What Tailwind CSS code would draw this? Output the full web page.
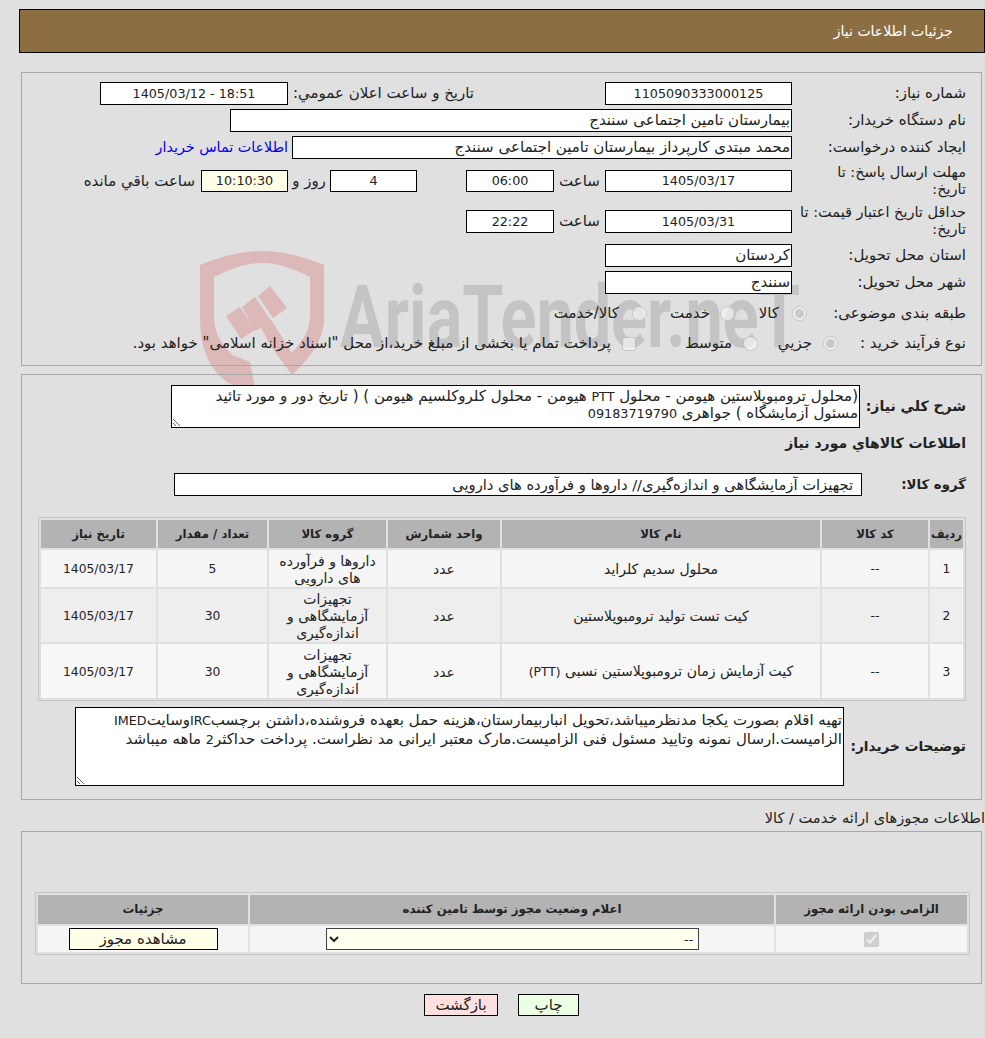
<!DOCTYPE html>
<html lang="fa" dir="rtl">
  <head>
    <meta charset="UTF-8" />
    <title>جزئیات اطلاعات نیاز</title>
    <script src="https://cdn.jsdelivr.net/npm/@tailwindcss/browser@4"></script>
  </head>
  <body class="relative min-h-screen bg-[#e0e0e0] text-[15px] leading-[17px] text-[#222] font-['DejaVu_Sans',sans-serif] overflow-x-hidden">
    <!-- watermark -->
    <svg class="absolute left-0 top-0 pointer-events-none" width="985" height="400">
      <path d="M200 265 C222 256 242 251 262 251 C282 251 302 256 324 265 L324 318 C324 340 310 358 292 375 L284 360 C300 346 310 332 310 316 L310 277 C294 269 278 263 262 263 C246 263 230 269 214 277 L214 318 C214 332 222 345 232 355 L250 362 L257 398 L240 398 L232 385 C210 372 200 350 200 318 Z" fill="#dcb8b8" />
      <path d="M226 316 L240 307 L255 330 L241 339 Z M242 307 L255 297 L272 322 L255 331 Z M258 296 L270 286 L287 308 L273 318 Z M258 322 L272 321 L295 358 L292 375 L270 345 Z" fill="#dcb8b8" />
      <text x="340" y="347" direction="ltr" text-anchor="start" font-size="88" font-weight="700" fill="#c4c4c4" font-family="Roboto, sans-serif" textLength="460" lengthAdjust="spacingAndGlyphs">AriaTender.neT</text>
    </svg>

    <div class="relative">
      <!-- header -->
      <div class="h-[44px] mt-[9px] ml-[19px] bg-[#8d6e42] border border-black flex items-center pr-[31px] absolute top-0 left-0 right-0">
        <span class="text-white text-[14px]">جزئیات اطلاعات نیاز</span>
      </div>

      <div class="pt-[72px] pl-[21px] pr-[3px]">
        <!-- form panel -->
        <section class="h-[294px] border border-[#a8a8a8] pr-[15px] pt-[9px]">
          <div class="flex items-center h-[23px]">
            <label class="w-[174px] shrink-0">شماره نیاز:</label>
            <div class="w-[187px] h-[23px] border border-black bg-white text-center leading-[21px] text-[12.75px]">1105090333000125</div>
            <label class="w-[181px] mr-[131px] ml-[5px] whitespace-nowrap">تاریخ و ساعت اعلان عمومي:</label>
            <div class="w-[188px] h-[23px] border border-black bg-white text-center leading-[21px] text-[12.75px]" dir="ltr">1405/03/12 - 18:51</div>
          </div>
          <div class="flex items-center h-[23px] mt-[4px]">
            <label class="w-[174px] shrink-0">نام دستگاه خریدار:</label>
            <div class="w-[562px] h-[23px] border border-black bg-white px-[1px] leading-[21px]">بیمارستان تامین اجتماعی سنندج</div>
          </div>
          <div class="flex items-center h-[23px] mt-[4px]">
            <label class="w-[174px] shrink-0">ایجاد کننده درخواست:</label>
            <div class="w-[500px] h-[23px] border border-black bg-white px-[1px] leading-[21px]">محمد مبتدی کارپرداز بیمارستان تامین اجتماعی سنندج</div>
            <a class="mr-[4px] text-[#0000ee] text-[14.3px] whitespace-nowrap">اطلاعات تماس خریدار</a>
          </div>
          <div class="flex items-center h-[36px] mt-[4px]">
            <label class="w-[174px] shrink-0 pl-[24px] text-[14.5px]">مهلت ارسال پاسخ: تا تاریخ:</label>
            <div class="w-[187px] h-[22px] border border-black bg-white text-center leading-[20px] text-[12.75px]">1405/03/17</div>
            <span class="w-[51px] text-center">ساعت</span>
            <div class="w-[88px] h-[22px] border border-black bg-white text-center leading-[20px] text-[12.75px]">06:00</div>
            <div class="w-[87px] h-[22px] mr-[49px] border border-black bg-white text-center leading-[20px] text-[12.75px]">4</div>
            <span class="w-[42px] text-center">روز و</span>
            <div class="w-[87px] h-[22px] border border-black bg-[#ffffe8] text-center leading-[20px] text-[12.75px]">10:10:30</div>
            <span class="mr-[6px] whitespace-nowrap">ساعت باقي مانده</span>
          </div>
          <div class="flex items-center h-[36px] mt-[4px]">
            <label class="w-[174px] shrink-0 text-[14.5px] pl-[4px]">حداقل تاریخ اعتبار قیمت: تا تاریخ:</label>
            <div class="w-[187px] h-[23px] border border-black bg-white text-center leading-[21px] text-[12.75px]">1405/03/31</div>
            <span class="w-[51px] text-center">ساعت</span>
            <div class="w-[88px] h-[23px] border border-black bg-white text-center leading-[21px] text-[12.75px]">22:22</div>
          </div>
          <div class="flex items-center h-[23px] mt-[5px]">
            <label class="w-[174px] shrink-0">استان محل تحویل:</label>
            <div class="w-[187px] h-[23px] border border-black bg-white px-[1px] leading-[21px]">کردستان</div>
          </div>
          <div class="flex items-center h-[23px] mt-[4px]">
            <label class="w-[174px] shrink-0">شهر محل تحویل:</label>
            <div class="w-[187px] h-[23px] border border-black bg-white px-[1px] leading-[21px]">سنندج</div>
          </div>
          <div class="flex items-center h-[23px] mt-[8px]">
            <label class="w-[159px] shrink-0">طبقه بندی موضوعی:</label>
            <input type="radio" disabled checked class="m-0 w-[15px] h-[15px]" />
            <span class="mr-[13px] w-[44px]">کالا</span>
            <input type="radio" disabled class="m-0 w-[15px] h-[15px]" />
            <span class="mr-[10px] w-[63px]">خدمت</span>
            <input type="radio" disabled class="m-0 w-[15px] h-[15px]" />
            <span class="mr-[13px]">کالا/خدمت</span>
          </div>
          <div class="flex items-center h-[23px] mt-[7px]">
            <label class="w-[128px] shrink-0">نوع فرآیند خرید :</label>
            <input type="radio" disabled checked class="m-0 w-[15px] h-[15px]" />
            <span class="mr-[11px] w-[54px]">جزيي</span>
            <input type="radio" disabled class="m-0 w-[15px] h-[15px]" />
            <span class="mr-[11px] w-[96px]">متوسط</span>
            <input type="checkbox" disabled class="m-0 w-[14px] h-[14px]" />
            <span class="mr-[11px] whitespace-nowrap">پرداخت تمام یا بخشی از مبلغ خرید،از محل "اسناد خزانه اسلامی" خواهد بود.</span>
          </div>
        </section>

        <!-- items panel -->
        <section class="h-[426px] mt-[8px] border border-[#a8a8a8] pr-[15px] pt-[10px]">
          <div class="flex items-center h-[43px]">
            <label class="w-[106px] shrink-0 font-bold text-[14px]">شرح كلي نیاز:</label>
            <div class="w-[689px] h-[43px] border border-black bg-white px-[1px] pt-[2px] leading-[17px] resize overflow-auto">(محلول ترومبوپلاستین هیومن - محلول <span class="text-[12.75px]">PTT</span> هیومن - محلول کلروکلسیم هیومن ) ( تاریخ دور و مورد تائید مسئول آزمایشگاه ) جواهری <span class="text-[12.75px]">09183719790</span></div>
          </div>
          <div class="mt-[7px] font-bold text-[14px]">اطلاعات کالاهاي مورد نیاز</div>
          <div class="flex items-center h-[23px] mt-[21px]">
            <label class="w-[104px] shrink-0 font-bold text-[13.3px]">گروه کالا:</label>
            <div class="w-[688px] h-[23px] border border-black bg-white px-[8px] leading-[21px] text-[14.7px]">تجهیزات آزمایشگاهی و اندازه‌گیری// داروها و فرآورده های دارویی</div>
          </div>
          <table class="mt-[21px] w-[928px] border-separate border-spacing-[2px] border border-[#c4c4c4] table-fixed text-center text-[14px]">
            <thead class="font-bold text-[11.7px]">
              <tr class="h-[28px]">
                <th class="w-[33px] bg-[#b3b3b3]">ردیف</th>
                <th class="w-[106px] bg-[#b3b3b3]">کد کالا</th>
                <th class="w-[318px] bg-[#b3b3b3]">نام کالا</th>
                <th class="w-[112px] bg-[#b3b3b3]">واحد شمارش</th>
                <th class="w-[117px] bg-[#b3b3b3]">گروه کالا</th>
                <th class="w-[109px] bg-[#b3b3b3]">تعداد / مقدار</th>
                <th class="bg-[#b3b3b3]">تاریخ نیاز</th>
              </tr>
            </thead>
            <tbody>
              <tr class="h-[37px] bg-[#f5f5f5] [&>td]:pt-[2px]">
                <td class="text-[12.3px]">1</td><td class="text-[12.3px]">--</td><td>محلول سدیم کلراید</td><td>عدد</td><td class="px-[8px]">داروها و فرآورده های دارویی</td><td class="text-[12.3px]">5</td><td class="text-[12.3px]">1405/03/17</td>
              </tr>
              <tr class="h-[53px] bg-[#eeeeee] [&>td]:pt-[2px]">
                <td class="text-[12.3px]">2</td><td class="text-[12.3px]">--</td><td>کیت تست تولید ترومبوپلاستین</td><td>عدد</td><td class="px-[8px]">تجهیزات آزمایشگاهی و اندازه‌گیری</td><td class="text-[12.3px]">30</td><td class="text-[12.3px]">1405/03/17</td>
              </tr>
              <tr class="h-[54px] bg-[#f7f7f7] [&>td]:pt-[2px]">
                <td class="text-[12.3px]">3</td><td class="text-[12.3px]">--</td><td>کیت آزمایش زمان ترومبوپلاستین نسبی <span class="text-[12.3px]">(PTT)</span></td><td>عدد</td><td class="px-[8px]">تجهیزات آزمایشگاهی و اندازه‌گیری</td><td class="text-[12.3px]">30</td><td class="text-[12.3px]">1405/03/17</td>
              </tr>
            </tbody>
          </table>
          <div class="flex items-center h-[79px] mt-[6px]">
            <label class="w-[122px] shrink-0 font-bold text-[13.7px]">توضیحات خریدار:</label>
            <div class="w-[769px] h-[79px] border border-black bg-white px-[1px] leading-[19px] pt-[3px] resize overflow-auto">تهیه اقلام بصورت یکجا مدنظرمیباشد،تحویل انباربیمارستان،هزینه حمل بعهده فروشنده،داشتن برچسب<span class="text-[12.75px]">IRC</span>وسایت<span class="text-[12.75px]">IMED</span> الزامیست.ارسال نمونه وتایید مسئول فنی الزامیست.مارک معتبر ایرانی مد نظراست. پرداخت حداکثر<span class="text-[12.75px]">2</span> ماهه میباشد</div>
          </div>
        </section>

        <div class="mt-[9px] h-[17px] -mr-[3px] text-[14.6px] whitespace-nowrap">اطلاعات مجوزهای ارائه خدمت / کالا</div>

        <!-- license panel -->
        <section class="h-[153px] mt-[5px] border border-[#a8a8a8] pt-[60px] pr-[11px]">
          <table class="w-[935px] border-separate border-spacing-[2px] border border-[#c4c4c4] table-fixed text-center">
            <thead class="font-bold text-[11.7px]">
              <tr class="h-[29px]">
                <th class="w-[191px] bg-[#b3b3b3]">الزامی بودن ارائه مجوز</th>
                <th class="w-[524px] bg-[#b3b3b3]">اعلام وضعیت مجوز توسط تامین کننده</th>
                <th class="bg-[#b3b3b3]">جزئیات</th>
              </tr>
            </thead>
            <tbody>
              <tr class="h-[26px] bg-[#f5f5f5]">
                <td><input type="checkbox" checked disabled class="align-middle w-[15px] h-[15px]" /></td>
                <td>
                  <select class="w-[373px] h-[22px] border border-[#444] bg-[#fffff0] align-middle appearance-auto text-[13px]"><option>--</option></select>
                </td>
                <td><button class="w-[149px] h-[22px] border border-black bg-[#ffffe8] align-middle">مشاهده مجوز</button></td>
              </tr>
            </tbody>
          </table>
        </section>

        <div class="flex justify-center gap-[20px] mt-[10px]">
          <button class="w-[61px] h-[22px] border border-black bg-[#eaffe4]">چاپ</button>
          <button class="w-[74px] h-[22px] border border-black bg-[#ffe0e0]">بازگشت</button>
        </div>
      </div>
    </div>
  </body>
</html>
